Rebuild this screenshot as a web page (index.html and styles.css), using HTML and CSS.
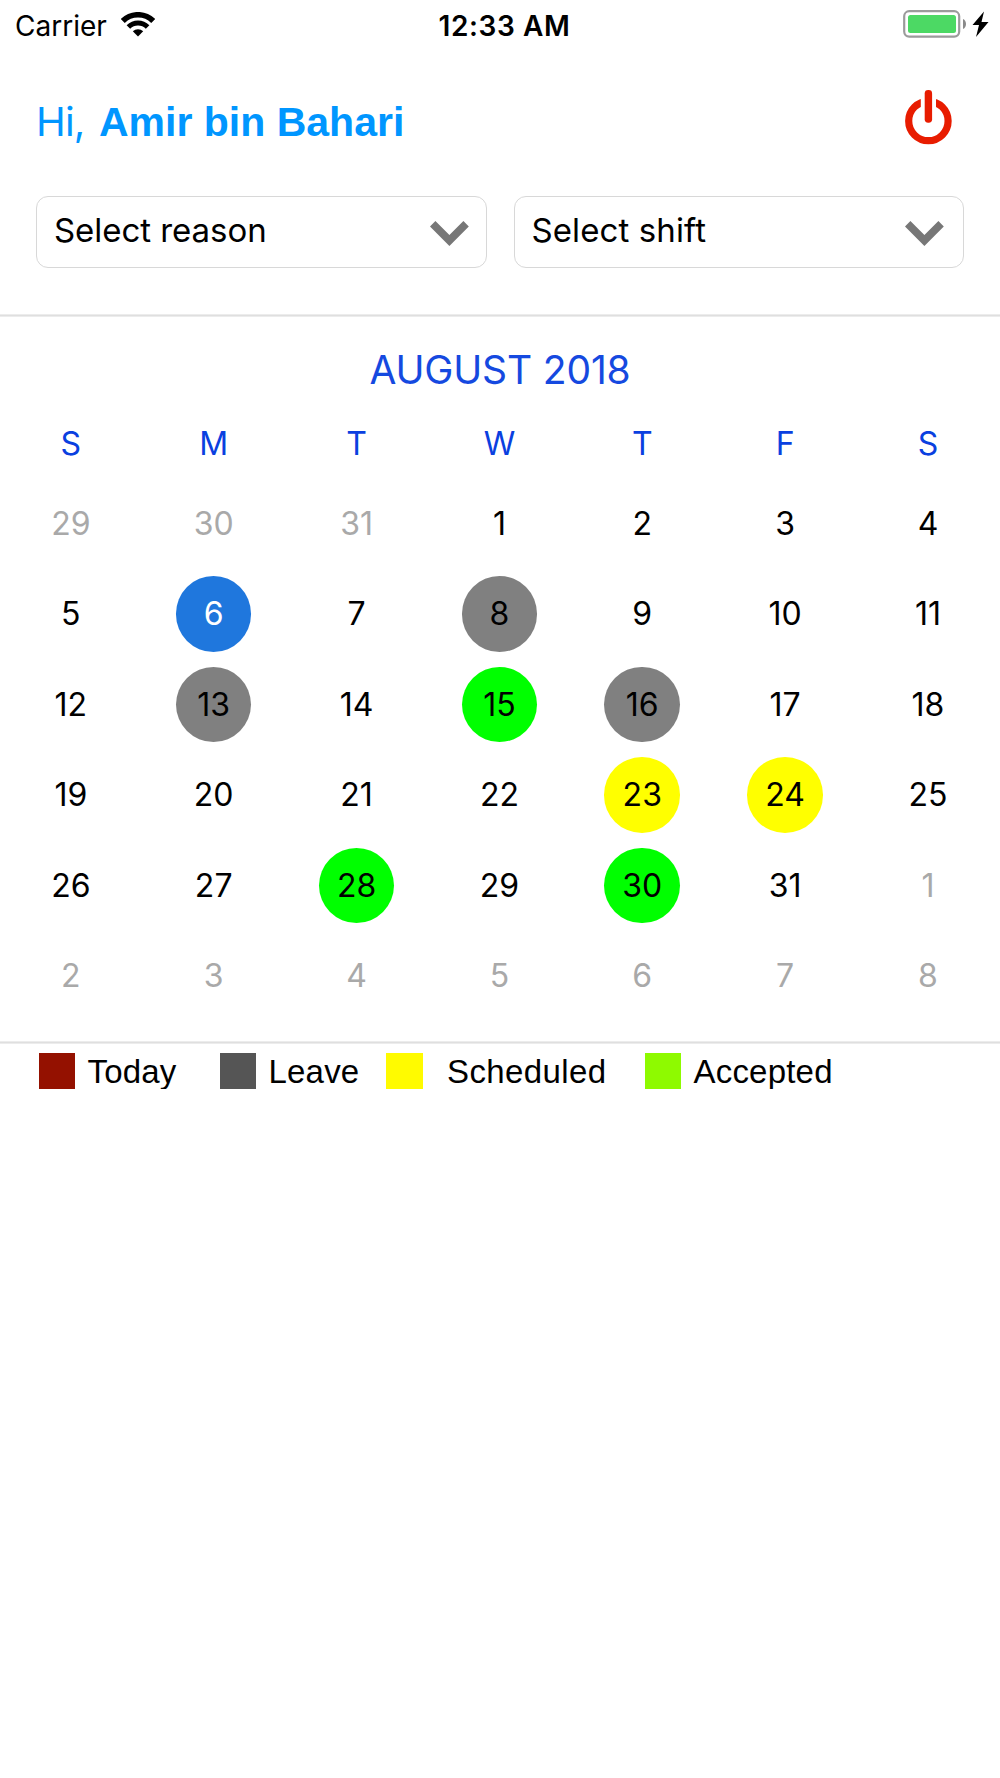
FILE: index.html
```
<!DOCTYPE html>
<html lang="en">

<head>
    <meta charset="UTF-8">
    <title>Shift Calendar</title>
    <link rel="stylesheet" href="styles.css">
</head>

<body>
    <div class="status-bar">
        <div class="carrier">
            <span>Carrier</span>
            <svg class="wifi" width="34" height="25" viewBox="0 0 34 25">
                <path d="M17 24.5 L11.8 19.2 A7.6 7.6 0 0 1 22.2 19.2 Z" fill="#000" />
                <path d="M7.4 14.9 A13.6 13.6 0 0 1 26.6 14.9" fill="none" stroke="#000" stroke-width="5" />
                <path d="M1.8 9 A21.6 21.6 0 0 1 32.2 9" fill="none" stroke="#000" stroke-width="5.6" />
            </svg>
        </div>
        <span class="time">12:33 AM</span>
        <svg class="battery" width="86" height="28" viewBox="0 0 86 28">
            <rect x="1.2" y="1.2" width="55" height="25.4" rx="5" fill="none" stroke="#9b9b9b" stroke-width="2.2" />
            <rect x="5" y="5" width="48" height="18" rx="2.5" fill="#4cd964" />
            <path d="M60 9 C64 10.5 64 17.5 60 19 Z" fill="#8a8a8a" />
            <path d="M81 1.5 L69.5 15 L76 15 L73 27 L85.5 12 L78.5 12 Z" fill="#000" />
        </svg>
    </div>

    <header class="header">
        <h1 class="greeting">Hi, <b>Amir bin Bahari</b></h1>
        <svg class="power" width="47" height="55" viewBox="0 0 47 55">
            <circle cx="23.4" cy="31" r="19.7" fill="none" stroke="#e81c00" stroke-width="7.2" />
            <rect x="15.8" y="0" width="15.2" height="20" fill="#fff" />
            <rect x="19.7" y="0" width="7.4" height="32.7" rx="3.4" fill="#e81c00" />
        </svg>
    </header>

    <div class="selects">
        <div class="select">
            <span>Select reason</span>
            <svg class="arrow" width="39" height="25" viewBox="0 0 39 25">
                <path d="M0 5.4 L5.4 0 L19.4 14 L33.4 0 L38.8 5.4 L19.4 25 Z" fill="#777" />
            </svg>
        </div>
        <div class="select select-shift">
            <span>Select shift</span>
            <svg class="arrow" width="39" height="25" viewBox="0 0 39 25">
                <path d="M0 5.4 L5.4 0 L19.4 14 L33.4 0 L38.8 5.4 L19.4 25 Z" fill="#777" />
            </svg>
        </div>
    </div>

    <div class="divider"></div>

    <div class="calendar">
        <h2 class="month">AUGUST 2018</h2>
        <div class="weekdays">
            <span>S</span><span>M</span><span>T</span><span>W</span><span>T</span><span>F</span><span>S</span>
        </div>
        <div class="days">
            <span class="day other">29</span>
            <span class="day other">30</span>
            <span class="day other">31</span>
            <span class="day">1</span>
            <span class="day">2</span>
            <span class="day">3</span>
            <span class="day">4</span>

            <span class="day">5</span>
            <span class="day selected">6</span>
            <span class="day">7</span>
            <span class="day leave">8</span>
            <span class="day">9</span>
            <span class="day">10</span>
            <span class="day">11</span>

            <span class="day">12</span>
            <span class="day leave">13</span>
            <span class="day">14</span>
            <span class="day accepted">15</span>
            <span class="day leave">16</span>
            <span class="day">17</span>
            <span class="day">18</span>

            <span class="day">19</span>
            <span class="day">20</span>
            <span class="day">21</span>
            <span class="day">22</span>
            <span class="day scheduled">23</span>
            <span class="day scheduled">24</span>
            <span class="day">25</span>

            <span class="day">26</span>
            <span class="day">27</span>
            <span class="day accepted">28</span>
            <span class="day">29</span>
            <span class="day accepted">30</span>
            <span class="day">31</span>
            <span class="day other">1</span>

            <span class="day other">2</span>
            <span class="day other">3</span>
            <span class="day other">4</span>
            <span class="day other">5</span>
            <span class="day other">6</span>
            <span class="day other">7</span>
            <span class="day other">8</span>
        </div>
    </div>

    <div class="divider"></div>

    <div class="legend">
        <div class="item item-today"><i class="box"></i><span>Today</span></div>
        <div class="item item-leave"><i class="box"></i><span>Leave</span></div>
        <div class="item item-scheduled"><i class="box"></i><span>Scheduled</span></div>
        <div class="item item-accepted"><i class="box"></i><span>Accepted</span></div>
    </div>
</body>

</html>
```

FILE: styles.css
```
* {
    box-sizing: border-box;
}

body {
    margin: 0;
    width: 1000px;
    background: #fff;
    color: #000;
    font-family: Inter, "Liberation Sans", sans-serif;
}

.status-bar {
    display: grid;
    grid-template-columns: 1fr auto 1fr;
    align-items: center;
    height: 51px;
    padding: 0 11px 0 15px;
    font-size: 28px;
}

.carrier {
    display: flex;
    align-items: center;
    gap: 14px;
}

.wifi {
    margin-top: -2px;
}

.time {
    margin-left: 5px;
    font-weight: 600;
    font-size: 28px;
    letter-spacing: 0.6px;
}

.battery {
    justify-self: end;
    margin-top: -3px;
}

.header {
    display: flex;
    justify-content: space-between;
    align-items: center;
    height: 142px;
    padding: 0 48px 0 36px;
    color: #0096ff;
}

.greeting {
    margin: -2px 0 0;
    font-size: 40px;
    font-weight: 400;
    letter-spacing: -0.8px;
}

.greeting b {
    margin-left: 4px;
    font-family: "Liberation Sans", Arial, sans-serif;
    font-size: 41px;
    font-weight: bold;
    letter-spacing: 0;
}

.power {
    margin-top: -9px;
}

.selects {
    display: flex;
    gap: 27px;
    padding: 3px 36px 46px;
}

.select {
    flex: 1;
    display: flex;
    justify-content: space-between;
    align-items: center;
    height: 72px;
    padding: 0 17px;
    border: 1px solid #d8d8d8;
    border-radius: 12px;
    font-size: 33px;
    letter-spacing: -0.05px;
}

.select-shift {
    letter-spacing: 0.1px;
}

.select-shift .arrow {
    margin-right: 2px;
}

.select span {
    margin-top: -4px;
}

.arrow {
    margin-top: 3px;
}

.divider {
    height: 3px;
    background: linear-gradient(#ececec 1px, #dfdfdf 1px, #dfdfdf 2px, #ececec 2px);
}

.calendar {
    height: 724px;
}

.month {
    margin: 0;
    height: 104px;
    line-height: 106px;
    font-size: 39px;
    font-weight: 400;
    letter-spacing: -0.15px;
    text-align: center;
    color: #1549e0;
}

.weekdays,
.days {
    display: grid;
    grid-template-columns: repeat(7, 1fr);
    justify-items: center;
    align-items: center;
    margin: 0 0.6px 0 -0.6px;
    font-size: 32px;
}

.weekdays {
    height: 44px;
    margin-bottom: 13px;
    color: #0a40e0;
}

.days {
    grid-auto-rows: 90.6px;
}

.day {
    width: 75.6px;
    height: 75.6px;
    line-height: 76.6px;
    border-radius: 50%;
    text-align: center;
}

.other {
    color: #a9a9a9;
}

.selected {
    background: #1f77dd;
    color: #fff;
}

.leave {
    background: #808080;
}

.scheduled {
    background: #ffff00;
}

.accepted {
    background: #00ff00;
}

.legend {
    display: flex;
    padding: 9px 0 0 39px;
    font-family: "Liberation Sans", Arial, sans-serif;
    font-size: 33px;
    letter-spacing: 0.2px;
}

.item {
    display: flex;
    align-items: center;
    height: 36px;
    white-space: nowrap;
}

.item span {
    padding-top: 2px;
}

.box {
    width: 36px;
    height: 36px;
    margin-right: 12.5px;
}

.item-today {
    width: 181px;
}

.item-leave {
    width: 166px;
}

.item-scheduled {
    width: 259px;
    letter-spacing: 0.4px;
}

.item-today .box {
    background: #941100;
}

.item-leave .box {
    background: #555;
}

.item-scheduled .box {
    background: #fffb00;
    width: 37px;
    margin-right: 24px;
}

.item-accepted .box {
    background: #8efa00;
}
```
